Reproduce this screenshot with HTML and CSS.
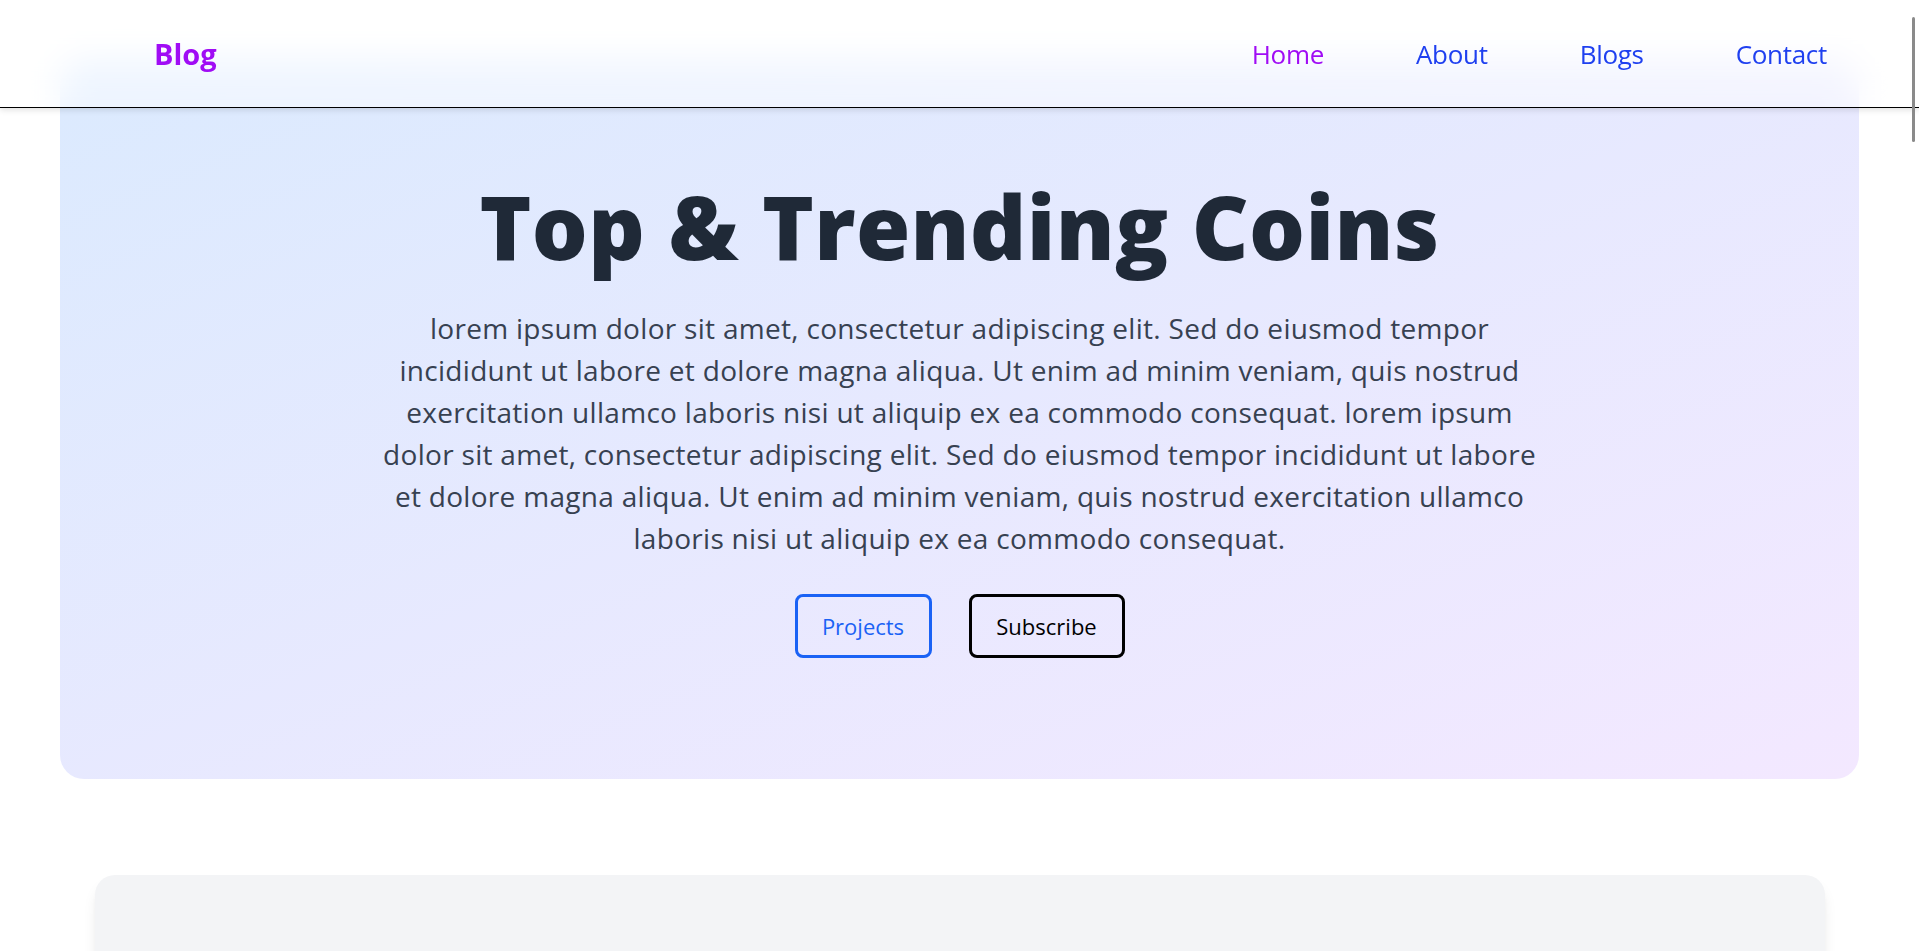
FILE: index.html
```html
<!DOCTYPE html>
<html lang="en">
<head>
<meta charset="utf-8">
<title>Blog</title>
<link rel="stylesheet" href="styles.css">
</head>
<body>
<header class="site-header">
  <a class="brand" href="#">Blog</a>
  <nav class="nav">
    <a class="nav-link active" href="#">Home</a>
    <a class="nav-link" href="#">About</a>
    <a class="nav-link" href="#">Blogs</a>
    <a class="nav-link" href="#">Contact</a>
  </nav>
</header>
<div class="scroll-thumb"></div>
<main>
  <section class="hero">
    <h1 class="hero-title">Top &amp; Trending Coins</h1>
    <p class="hero-text">lorem ipsum dolor sit amet, consectetur adipiscing elit. Sed do eiusmod tempor incididunt ut labore et dolore magna aliqua. Ut enim ad minim veniam, quis nostrud exercitation ullamco laboris nisi ut aliquip ex ea commodo consequat. lorem ipsum dolor sit amet, consectetur adipiscing elit. Sed do eiusmod tempor incididunt ut labore et dolore magna aliqua. Ut enim ad minim veniam, quis nostrud exercitation ullamco laboris nisi ut aliquip ex ea commodo consequat.</p>
    <div class="hero-actions">
      <a class="btn btn-primary" href="#">Projects</a>
      <a class="btn btn-dark" href="#">Subscribe</a>
    </div>
  </section>
  <section class="panel"></section>
</main>
</body>
</html>
```
FILE: styles.css
```css
html {
  scrollbar-width: none;
}
body {
  margin: 0;
  font-family: "Open Sans", "Noto Sans", sans-serif;
  background: #ffffff;
  color: #1f2937;
}
a {
  text-decoration: none;
}
.site-header {
  position: fixed;
  top: 0;
  left: 0;
  right: 0;
  z-index: 10;
  height: 107px;
  display: flex;
  align-items: center;
  justify-content: space-between;
  padding: 0 92px 0 154px;
  background: rgba(255, 255, 255, 0.5);
  backdrop-filter: blur(18px);
  border-bottom: 1px solid #000;
  box-shadow: 0 2px 6px rgba(0, 0, 0, 0.12);
}
.brand {
  font-size: 29px;
  font-weight: 700;
  color: #a00cf5;
}
.nav {
  display: flex;
  gap: 92px;
}
.nav-link {
  font-size: 26px;
  color: #1f40f0;
  letter-spacing: -0.3px;
}
.nav-link.active {
  color: #a00cf5;
}
.scroll-thumb {
  position: fixed;
  top: 17px;
  left: 1912px;
  width: 3px;
  height: 125px;
  border-radius: 2px;
  background: #8a8a8a;
  z-index: 20;
}
.hero {
  margin: 60px 60px 0;
  padding: 118px 0 121px;
  border-radius: 24px;
  background: linear-gradient(to bottom right, #dbeafe, #f3e8ff);
  display: flex;
  flex-direction: column;
  align-items: center;
  text-align: center;
}
.hero-title {
  margin: 0;
  font-size: 88px;
  line-height: 1.1;
  font-weight: 800;
  color: #1f2937;
  letter-spacing: 0.3px;
}
.hero-text {
  margin: 32px 0 0;
  width: 1166px;
  font-size: 28px;
  line-height: 42px;
  letter-spacing: 0.3px;
  color: #374151;
}
.hero-actions {
  margin-top: 35px;
  display: flex;
  gap: 37px;
}
.btn {
  box-sizing: border-box;
  height: 64px;
  display: flex;
  align-items: center;
  justify-content: center;
  border-radius: 8px;
  border: 3px solid;
  font-size: 22px;
}
.btn-primary {
  width: 137px;
  color: #1a62f5;
  border-color: #1a62f5;
}
.btn-dark {
  width: 156px;
  color: #000;
  border-color: #000;
}
.panel {
  width: 1730px;
  height: 600px;
  margin: 96px auto 40px;
  border-radius: 20px;
  background: #f3f4f6;
  box-shadow: 0 10px 15px -3px rgba(0, 0, 0, 0.1), 0 4px 6px -4px rgba(0, 0, 0, 0.1);
}
```
